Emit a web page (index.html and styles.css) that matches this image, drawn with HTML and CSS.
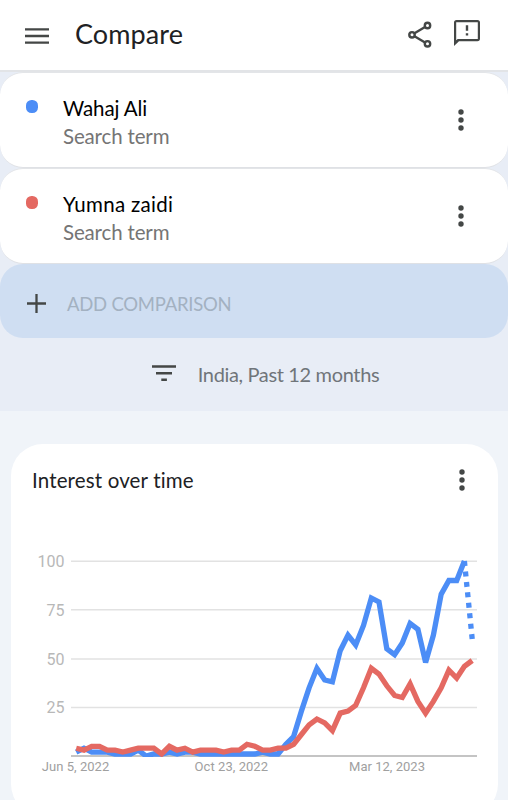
FILE: index.html
```html
<!DOCTYPE html>
<html lang="en">
<head>
    <meta charset="UTF-8">
    <meta name="viewport" content="width=device-width, initial-scale=1.0">
    <title>Compare</title>
    <link rel="stylesheet" href="styles.css">
</head>
<body>
    <header class="topbar">
        <svg class="menu-icon" width="24" height="16" viewBox="0 0 24 16"><path d="M0 1.3h24M0 8h24M0 14.7h24" stroke="#444746" stroke-width="2.3"/></svg>
        <h1>Compare</h1>
        <svg class="share-icon" width="24" height="27" viewBox="0 0 24 27" fill="none" stroke="#444746" stroke-width="2.4">
            <path d="M6.5 12.300L17 6M6.5 15.200L17 21.500"/>
            <circle cx="4" cy="13.800" r="2.700"/>
            <circle cx="19.500" cy="4.500" r="2.700"/>
            <circle cx="19.500" cy="22.800" r="2.700"/>
        </svg>
        <svg class="feedback-icon" width="26" height="27" viewBox="0 0 26 27">
            <path fill="#444746" fill-rule="evenodd" d="M2.6 0h20.8A2.6 2.6 0 0 1 26 2.6v16a2.6 2.6 0 0 1-2.6 2.6H5L0 26V2.600A2.6 2.6 0 0 1 2.600 0zM2.200 2.200v18L3.700 19H23.800V2.200z"/>
            <path fill="#444746" d="M11.800 5.200h2.400v5.600h-2.400zM11.800 13.200h2.400v2.400h-2.400z"/>
        </svg>
    </header>

    <section class="terms">
        <div class="term">
            <span class="dot blue"></span>
            <div class="term-text">
                <div class="term-name">Wahaj Ali</div>
                <div class="term-type">Search term</div>
            </div>
            <svg class="more" width="6" height="22" viewBox="0 0 6 22"><circle cx="3" cy="3" r="2.700"/><circle cx="3" cy="11" r="2.700"/><circle cx="3" cy="19" r="2.700"/></svg>
        </div>
        <div class="term">
            <span class="dot red"></span>
            <div class="term-text">
                <div class="term-name long">Yumna zaidi</div>
                <div class="term-type">Search term</div>
            </div>
            <svg class="more" width="6" height="22" viewBox="0 0 6 22"><circle cx="3" cy="3" r="2.700"/><circle cx="3" cy="11" r="2.700"/><circle cx="3" cy="19" r="2.700"/></svg>
        </div>
        <div class="add">
            <svg width="19" height="19" viewBox="0 0 19 19"><path d="M9.500 0v19M0 9.500h19" stroke="#444746" stroke-width="2.300"/></svg>
            <span>ADD COMPARISON</span>
        </div>
        <div class="filters">
            <svg width="24" height="17" viewBox="0 0 24 17"><path d="M0 1.500h24M4 8.200h16M9.300 14.700h5.600" stroke="#444746" stroke-width="2.400"/></svg>
            <span>India, Past 12 months</span>
        </div>
    </section>

    <main class="card">
        <div class="card-head">
            <h2>Interest over time</h2>
            <svg class="more" width="6" height="22" viewBox="0 0 6 22"><circle cx="3" cy="3" r="2.700"/><circle cx="3" cy="11" r="2.700"/><circle cx="3" cy="19" r="2.700"/></svg>
        </div>
        <svg class="chart" width="487" height="240" viewBox="11 545 487 240">
            <defs>
                <clipPath id="plot"><rect x="71" y="555" width="407" height="202"/></clipPath>
            </defs>
            <g class="grid">
                <path d="M71 561.200h406M71 609.700h406M71 659.100h406M71 707.600h406"/>
                <path class="axis" d="M71 756h406"/>
            </g>
            <g class="y-labels">
                <text x="64.500" y="567">100</text>
                <text x="64.500" y="616">75</text>
                <text x="64.500" y="664.500">50</text>
                <text x="64.500" y="713">25</text>
            </g>
            <g class="x-labels">
                <text x="75.500" y="771" textLength="67.500">Jun 5, 2022</text>
                <text x="231.300" y="771" textLength="73.500">Oct 23, 2022</text>
                <text x="387" y="771" textLength="76">Mar 12, 2023</text>
            </g>
            <g id="lines" clip-path="url(#plot)"></g>
        </svg>
    </main>

    <script src="chart.js"></script>
</body>
</html>
```

FILE: styles.css
```css
* {
    box-sizing: border-box;
}
body {
    margin: 0;
    height: 800px;
    overflow: hidden;
    background: #f0f4f9;
    font-family: Lato, "Open Sans", sans-serif;
    color: #202124;
}
svg {
    display: block;
    flex: none;
}
h1, h2 {
    margin: 0;
    font-weight: 400;
    white-space: nowrap;
}
.topbar {
    display: flex;
    align-items: flex-start;
    height: 72px;
    padding: 0 28px 0 25px;
    background: #fff;
    border-bottom: 2px solid #e2e4e7;
}
.menu-icon {
    margin-top: 28px;
}
h1 {
    margin: 17px 0 0 26px;
    font-size: 27px;
    line-height: 34px;
    letter-spacing: 0.1px;
}
.share-icon {
    margin: 21px 0 0 auto;
}
.feedback-icon {
    margin: 20px 0 0 22px;
}
.terms {
    height: 339px;
    background: #e8edf6;
}
.term {
    display: flex;
    height: 96px;
    padding: 21px 44.5px 0 26px;
    background: #fff;
    border-bottom: 1px solid #dfe1e5;
    border-top: 1px solid #e3e5e8;
    border-radius: 23px;
}
.dot {
    width: 12px;
    height: 13px;
    margin-top: 6px;
    border-radius: 5.5px;
}
.blue {
    background: #4c8df6;
}
.red {
    background: #e46962;
}
.term-text {
    margin-left: 25px;
    font-size: 20.5px;
    line-height: 28px;
    white-space: nowrap;
}
.term-name {
    color: #000;
    letter-spacing: -0.1px;
}
.term-name.long {
    letter-spacing: 0.3px;
}
.term-type {
    color: #757575;
    letter-spacing: -0.15px;
}
.more {
    margin: 15px 0 0 auto;
    fill: #444746;
}
.add {
    display: flex;
    align-items: center;
    height: 73.5px;
    padding: 6px 0 0 27px;
    border-radius: 23px;
    background: #cfdef2;
    color: #a3b1c1;
    font-size: 18.5px;
    letter-spacing: -0.25px;
}
.add span {
    margin-left: 21px;
}
.filters {
    display: flex;
    align-items: center;
    justify-content: center;
    height: 73px;
    padding: 0 0 1px 23px;
    color: #70757a;
    font-size: 20px;
    letter-spacing: -0.35px;
}
.filters span {
    margin-left: 22px;
}
.card {
    width: 487px;
    height: 372px;
    margin: 32.5px 0 0 11px;
    background: #fff;
    border-radius: 32px;
}
.card-head {
    display: flex;
    height: 101.5px;
    padding: 21px 33.5px 0 21px;
}
h2 {
    font-size: 20.5px;
    line-height: 30px;
    letter-spacing: 0.15px;
}
.card-head .more {
    margin-top: 4px;
}
.grid path {
    fill: none;
    stroke: #e2e2e2;
    stroke-width: 1.5px;
}
.grid .axis {
    stroke: #b0b0b0;
}
.y-labels,
.x-labels {
    font-family: Roboto, sans-serif;
}
.y-labels {
    font-size: 16px;
    text-anchor: end;
    fill: #b8b8b8;
}
.x-labels {
    font-size: 13px;
    text-anchor: middle;
    fill: #a0a0a0;
}
.line {
    fill: none;
    stroke-width: 5.3px;
    stroke-miterlimit: 3.7;
}
.line-blue {
    stroke: #4c8df6;
}
.line-red {
    stroke: #e46962;
}
.partial {
    stroke-dasharray: 5 5.5;
}
```

FILE: chart.js
```js
const wahaj = [2, 4, 2, 2, 2, 1, 1, 1, 3, 0, 1, 1, 2, 1, 2, 2, 1, 1, 1, 1, 1, 1, 1, 1, 2, 1, 1, 6, 10,
    23, 35, 45, 39, 38, 54, 62, 57, 67, 81, 79, 55, 52, 58, 68, 65, 48, 62, 83, 90, 90, 100];
const yumna = [4, 3, 5, 5, 3, 3, 2, 3, 4, 4, 4, 1, 5, 3, 4, 2, 3, 3, 3, 2, 3, 3, 6, 5, 3, 3, 4, 4, 6,
    11, 16, 19, 17, 13, 22, 23, 26, 35, 45, 42, 36, 31, 30, 37, 28, 22, 28, 35, 44, 40, 46, 49];

function point(value, week) {
    return (76.2 + week * 7.765).toFixed(1) + ',' + (756 - value * 1.95).toFixed(1);
}

function drawLine(points, className) {
    const line = document.createElementNS('http://www.w3.org/2000/svg', 'polyline');
    line.setAttribute('points', points.join(' '));
    line.setAttribute('class', 'line ' + className);
    document.getElementById('lines').appendChild(line);
}

drawLine(wahaj.map(point), 'line-blue');
// last week is incomplete
drawLine([point(100, 50), point(60, 51)], 'line-blue partial');
drawLine(yumna.map(point), 'line-red');
```
